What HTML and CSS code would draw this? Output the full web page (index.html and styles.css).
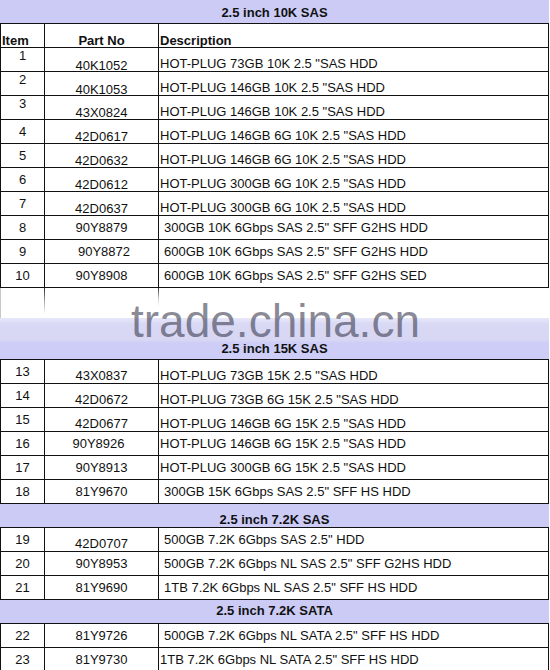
FILE: index.html
```html
<!DOCTYPE html>
<html lang="en">
<head>
<meta charset="utf-8">
<title>2.5 inch SAS / SATA HDD list</title>
<link rel="stylesheet" href="styles.css">
</head>
<body>
<div class="sheet">
  <div class="band band-top">2.5 inch 10K SAS</div>
  <div class="row head">
    <div class="cell item-h">Item</div>
    <div class="cell part">Part No</div>
    <div class="cell desc">Description</div>
  </div>
  <div class="row"><div class="cell item t">1</div><div class="cell part b2">40K1052</div><div class="cell desc d">HOT-PLUG 73GB 10K 2.5 "SAS HDD</div></div>
  <div class="row"><div class="cell item t">2</div><div class="cell part b2">40K1053</div><div class="cell desc d">HOT-PLUG 146GB 10K 2.5 "SAS HDD</div></div>
  <div class="row"><div class="cell item t">3</div><div class="cell part b">43X0824</div><div class="cell desc d">HOT-PLUG 146GB 10K 2.5 "SAS HDD</div></div>
  <div class="row"><div class="cell item c">4</div><div class="cell part b">42D0617</div><div class="cell desc d">HOT-PLUG 146GB 6G 10K 2.5 "SAS HDD</div></div>
  <div class="row"><div class="cell item c">5</div><div class="cell part b">42D0632</div><div class="cell desc d">HOT-PLUG 146GB 6G 10K 2.5 "SAS HDD</div></div>
  <div class="row"><div class="cell item c">6</div><div class="cell part b">42D0612</div><div class="cell desc d">HOT-PLUG 300GB 6G 10K 2.5 "SAS HDD</div></div>
  <div class="row"><div class="cell item c">7</div><div class="cell part b">42D0637</div><div class="cell desc d">HOT-PLUG 300GB 6G 10K 2.5 "SAS HDD</div></div>
  <div class="row"><div class="cell item c">8</div><div class="cell part c">90Y8879</div><div class="cell desc ind c">300GB 10K 6Gbps SAS 2.5" SFF G2HS HDD</div></div>
  <div class="row"><div class="cell item c">9</div><div class="cell part c shift-r">90Y8872</div><div class="cell desc ind c">600GB 10K 6Gbps SAS 2.5" SFF G2HS HDD</div></div>
  <div class="row"><div class="cell item c">10</div><div class="cell part c">90Y8908</div><div class="cell desc ind c">600GB 10K 6Gbps SAS 2.5" SFF G2HS SED</div></div>
  <div class="row ghost"><div class="cell stub-a"></div><div class="cell stub-b"></div><div class="cell"></div></div>
  <div class="band band-15k">2.5 inch 15K SAS</div>
  <div class="row"><div class="cell item c">13</div><div class="cell part d">43X0837</div><div class="cell desc d">HOT-PLUG 73GB 15K 2.5 "SAS HDD</div></div>
  <div class="row"><div class="cell item c">14</div><div class="cell part d">42D0672</div><div class="cell desc d">HOT-PLUG 73GB 6G 15K 2.5 "SAS HDD</div></div>
  <div class="row"><div class="cell item c">15</div><div class="cell part d">42D0677</div><div class="cell desc d">HOT-PLUG 146GB 6G 15K 2.5 "SAS HDD</div></div>
  <div class="row"><div class="cell item c">16</div><div class="cell part c shift-l">90Y8926</div><div class="cell desc c">HOT-PLUG 146GB 6G 15K 2.5 "SAS HDD</div></div>
  <div class="row"><div class="cell item c">17</div><div class="cell part c">90Y8913</div><div class="cell desc c">HOT-PLUG 300GB 6G 15K 2.5 "SAS HDD</div></div>
  <div class="row"><div class="cell item c">18</div><div class="cell part c">81Y9670</div><div class="cell desc ind c">300GB 15K 6Gbps SAS 2.5" SFF HS HDD</div></div>
  <div class="band band-sas72">2.5 inch 7.2K SAS</div>
  <div class="row"><div class="cell item c">19</div><div class="cell part d">42D0707</div><div class="cell desc ind c">500GB 7.2K 6Gbps SAS 2.5" HDD</div></div>
  <div class="row"><div class="cell item c">20</div><div class="cell part c">90Y8953</div><div class="cell desc ind c">500GB 7.2K 6Gbps NL SAS 2.5" SFF G2HS HDD</div></div>
  <div class="row"><div class="cell item c">21</div><div class="cell part c">81Y9690</div><div class="cell desc ind c">1TB 7.2K 6Gbps NL SAS 2.5" SFF HS HDD</div></div>
  <div class="band band-sata">2.5 inch 7.2K SATA</div>
  <div class="row"><div class="cell item c">22</div><div class="cell part c">81Y9726</div><div class="cell desc ind c">500GB 7.2K 6Gbps NL SATA 2.5" SFF HS HDD</div></div>
  <div class="row"><div class="cell item c">23</div><div class="cell part c">81Y9730</div><div class="cell desc c">1TB 7.2K 6Gbps NL SATA 2.5" SFF HS HDD</div></div>
  <div class="watermark">trade.china.cn</div>
</div>
</body>
</html>
```

FILE: styles.css
```css
html, body {
  margin: 0;
  padding: 0;
  background: #fff;
}

body {
  width: 550px;
  height: 670px;
  overflow: hidden;
  font-family: "Liberation Sans", Arial, sans-serif;
  font-size: 13px;
  line-height: 15px;
  color: #111;
}

.sheet {
  position: relative;
  width: 549px;
}

/* section title bands */
.band {
  height: 24px;
  box-sizing: border-box;
  border-bottom: 1px solid #111;
  background: #cbcbf6;
  font-weight: bold;
  text-align: center;
  white-space: nowrap;
}

.band-top { padding-top: 5px; }
.band-sas72 { padding-top: 8px; }
.band-sata { padding-top: 3px; }

.band-15k {
  height: 42px;
  padding-top: 23px;
  background: linear-gradient(to bottom,
    #e8e8f9 0px, #d9d9f5 6px, #d7d7f4 22px,
    #cdcdf7 25px, #cdcdf7 100%);
}

/* data rows */
.row {
  display: grid;
  grid-template-columns: 44px 114px 1fr;
  grid-template-rows: 23px;
  height: 24px;
  box-sizing: border-box;
  border-left: 1px solid #111;
  border-right: 1px solid #111;
  border-bottom: 1px solid #111;
  white-space: nowrap;
}

.cell {
  box-sizing: border-box;
}

.cell:not(:last-child) {
  border-right: 1px solid #111;
}

.item,
.part {
  text-align: center;
}

.desc { padding-left: 1px; }
.desc.ind { padding-left: 5px; }

.shift-r { padding-left: 5px; }
.shift-l { padding-right: 6px; }

.head .cell {
  font-weight: bold;
  padding-top: 9px;
}

.head .item-h {
  padding-left: 1px;
}

/* vertical placement of cell text */
.t { padding-top: 0; }
.c { padding-top: 4px; }
.d { padding-top: 8px; }
.b { padding-top: 9px; }
.b2 { padding-top: 10px; }

/* row hidden under the watermark */
.ghost {
  height: 30px;
  grid-template-rows: 30px;
  border-bottom: 0;
  border-right: 0;
  border-left: 1px solid #c8c8c8;
}

.ghost .stub-a {
  border-right: 1px solid transparent;
  border-image: linear-gradient(to bottom, #222 0%, rgba(0, 0, 0, 0.35) 45%, rgba(0, 0, 0, 0) 85%) 1;
}

.ghost .stub-b {
  border-right: 1px solid transparent;
  border-image: linear-gradient(to bottom, #222 0%, rgba(0, 0, 0, 0.2) 35%, rgba(0, 0, 0, 0) 60%) 1;
}

.watermark {
  position: absolute;
  left: 131px;
  top: 302px;
  font-family: "Liberation Sans", Arial, sans-serif;
  font-size: 46px;
  line-height: 38px;
  color: rgba(60, 60, 80, 0.6);
  white-space: nowrap;
  pointer-events: none;
}
```
